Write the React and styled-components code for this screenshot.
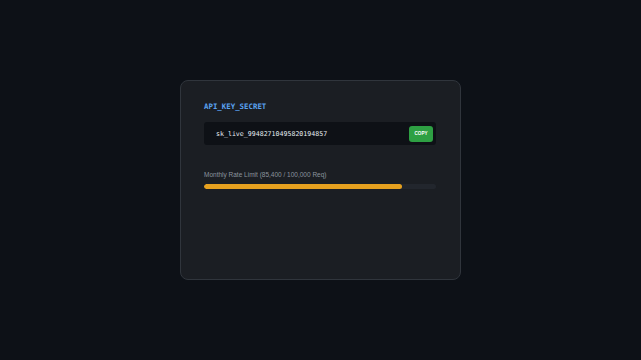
import styled, { createGlobalStyle } from 'styled-components'

const GlobalStyle = createGlobalStyle`
  html, body {
    margin: 0;
    padding: 0;
    background: #0d1117;
  }
  #root {
    width: 100vw;
    height: 100vh;
  }
`;

const Page = styled.div`
  display: flex;
  align-items: center;
  justify-content: center;
  width: 100%;
  height: 100%;
  background: #0d1117;
`;

const Card = styled.div`
  box-sizing: border-box;
  display: flex;
  flex-direction: column;
  width: 281px;
  height: 200px;
  padding: 21px 24px 21px 23px;
  background: #1b1e23;
  border: 1px solid #30353c;
  border-radius: 8px;
`;

const Title = styled.div`
  font-family: "DejaVu Sans Mono", "Liberation Mono", monospace;
  font-size: 7.4px;
  font-weight: 700;
  color: #5aa2f0;
  line-height: 10px;
`;

const KeyBox = styled.div`
  display: flex;
  align-items: center;
  justify-content: space-between;
  margin-top: 10px;
  height: 23px;
  padding: 0 3px 0 12px;
  background: #0e1116;
  border-radius: 3px;
`;

const KeyText = styled.span`
  font-family: "DejaVu Sans Mono", "Liberation Mono", monospace;
  font-size: 6.6px;
  color: #e6edf3;
`;

const CopyButton = styled.button`
  width: 24px;
  height: 16px;
  padding: 0;
  border: none;
  border-radius: 3px;
  background: #2ea043;
  color: #fff;
  font-family: "Liberation Sans", Arial, sans-serif;
  font-size: 4.6px;
  font-weight: 700;
`;

const Label = styled.div`
  margin-top: 26px;
  font-family: "Liberation Sans", Arial, sans-serif;
  font-size: 6.5px;
  color: #8b949e;
`;

const Track = styled.div`
  margin-top: 6px;
  height: 5px;
  background: #22262d;
  border-radius: 3px;
  overflow: hidden;
`;

const Fill = styled.div`
  height: 100%;
  background: #e6a11f;
  border-radius: 3px;
`;

export default function App() {
    const used = 85400;
    const limit = 100000;
    const pct = (used / limit) * 100;

    return (
        <>
            <GlobalStyle />
            <Page>
                <Card>
                    <Title>API_KEY_SECRET</Title>
                    <KeyBox>
                        <KeyText>sk_live_99482710495820194857</KeyText>
                        <CopyButton>COPY</CopyButton>
                    </KeyBox>
                    <Label>Monthly Rate Limit (85,400 / 100,000 Req)</Label>
                    <Track>
                        <Fill style={{width: `${pct}%`}} />
                    </Track>
                </Card>
            </Page>
        </>
    )
}
